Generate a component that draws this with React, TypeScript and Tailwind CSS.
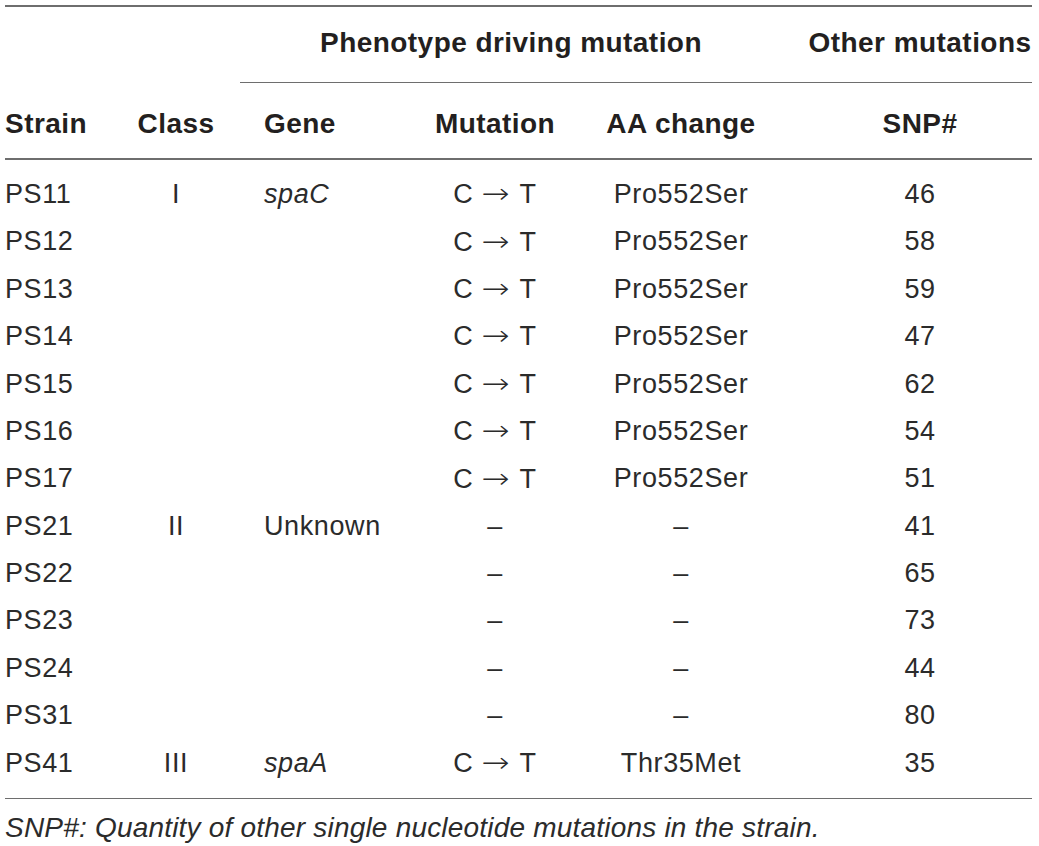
const rows = [
  { strain: "PS11", cls: "I", gene: "spaC", italic: true, mut: true, aa: "Pro552Ser", snp: "46" },
  { strain: "PS12", cls: "", gene: "", mut: true, aa: "Pro552Ser", snp: "58" },
  { strain: "PS13", cls: "", gene: "", mut: true, aa: "Pro552Ser", snp: "59" },
  { strain: "PS14", cls: "", gene: "", mut: true, aa: "Pro552Ser", snp: "47" },
  { strain: "PS15", cls: "", gene: "", mut: true, aa: "Pro552Ser", snp: "62" },
  { strain: "PS16", cls: "", gene: "", mut: true, aa: "Pro552Ser", snp: "54" },
  { strain: "PS17", cls: "", gene: "", mut: true, aa: "Pro552Ser", snp: "51" },
  { strain: "PS21", cls: "II", gene: "Unknown", mut: false, aa: "–", snp: "41" },
  { strain: "PS22", cls: "", gene: "", mut: false, aa: "–", snp: "65" },
  { strain: "PS23", cls: "", gene: "", mut: false, aa: "–", snp: "73" },
  { strain: "PS24", cls: "", gene: "", mut: false, aa: "–", snp: "44" },
  { strain: "PS31", cls: "", gene: "", mut: false, aa: "–", snp: "80" },
  { strain: "PS41", cls: "III", gene: "spaA", italic: true, mut: true, aa: "Thr35Met", snp: "35" },
];

// column widths: strain | class | gene | mutation | aa change | snp
const cols = "grid grid-cols-[107px_128px_180px_150px_222px_240px]";

function Mutation({ on }: { on: boolean }) {
  if (!on) return <>–</>;
  return (
    <>
      C
      <span className="inline-block scale-x-[1.2] font-['DejaVu_Sans',sans-serif] font-extralight text-[28px] mx-[11px]">→</span>
      T
    </>
  );
}

export default function App() {
  return (
    <div className="bg-white w-[1039px] h-[846px] font-['Liberation_Sans',Arial,sans-serif] text-[#231f20]">
      <div className="pt-[5px] pl-[5px] w-[1032px]">
        <div className="h-[1.5px] bg-[#6e6e6e]" />

        {/* header row 1 */}
        <div className={`${cols} h-[75px] items-center pb-[3px] font-bold text-[28px] tracking-[0.45px]`}>
          <div />
          <div />
          <div className="col-span-3 text-center pr-[10px]">Phenotype driving mutation</div>
          <div className="text-center pl-[16px]">Other mutations</div>
        </div>
        <div className="ml-[235px] h-[1.5px] bg-[#6e6e6e]" />

        {/* header row 2 */}
        <div className={`${cols} h-[75px] items-center pt-[6px] font-bold text-[28px] tracking-[0.45px]`}>
          <div>Strain</div>
          <div className="text-center">Class</div>
          <div className="pl-[24px]">Gene</div>
          <div className="text-center">Mutation</div>
          <div className="text-center">AA change</div>
          <div className="text-center pl-[16px]">SNP#</div>
        </div>
        <div className="h-[1.5px] bg-[#6e6e6e]" />

        {/* body */}
        <div className="py-[11px] text-[27px] tracking-[0.6px] text-[#2b2b2b]">
          {rows.map((r) => (
            <div key={r.strain} className={`${cols} h-[47.4px] items-center`}>
              <div>{r.strain}</div>
              <div className="text-center">{r.cls}</div>
              <div className={`pl-[24px] ${r.italic ? "italic" : ""}`}>{r.gene}</div>
              <div className="text-center">
                <Mutation on={r.mut} />
              </div>
              <div className="text-center">{r.aa}</div>
              <div className="text-center pl-[16px]">{r.snp}</div>
            </div>
          ))}
        </div>
        <div className="h-[1.5px] bg-[#6e6e6e]" />

        <p className="pt-[8px] italic text-[28px] tracking-[0.2px] text-[#2b2b2b]">
          SNP#: Quantity of other single nucleotide mutations in the strain.
        </p>
      </div>
    </div>
  );
}
